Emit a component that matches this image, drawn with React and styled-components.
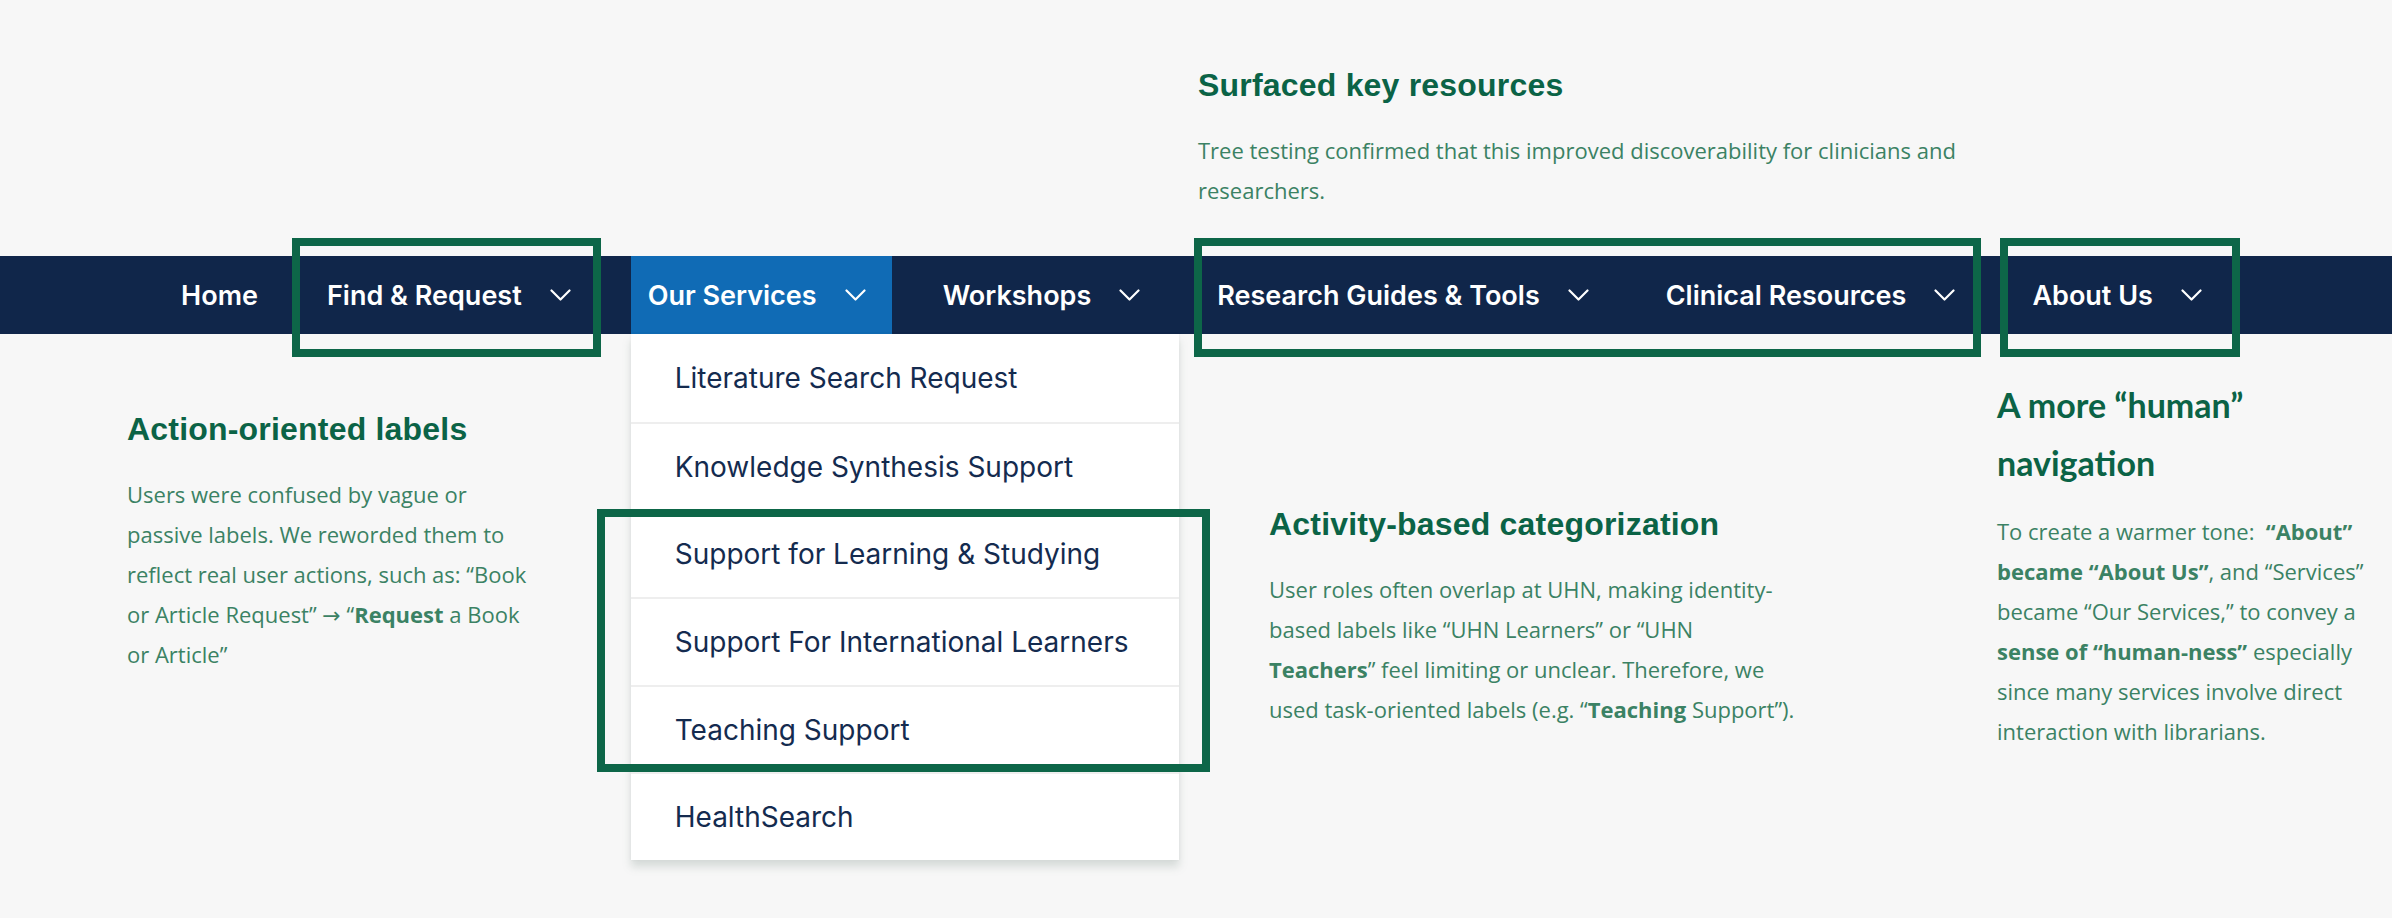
import React from 'react';
import styled, { createGlobalStyle } from 'styled-components';

const GlobalStyle = createGlobalStyle`
  html, body {
    margin: 0;
    padding: 0;
    background: #f7f7f7;
  }
  * {
    box-sizing: border-box;
  }
`;

const Canvas = styled.div`
  width: 2392px;
  height: 918px;
  overflow: hidden;
  background: #f7f7f7;
  display: flex;
  flex-direction: column;
`;

const TopBand = styled.div`
  height: 256px;
  padding: 66px 0 0 1198px;
`;

const Note = styled.div`
  width: ${(p) => p.$width}px;
  margin-left: ${(p) => p.$left || 0}px;
  margin-top: ${(p) => p.$top || 0}px;
  flex-shrink: 0;
`;

const NoteTitle = styled.h2`
  margin: 0;
  font-family: 'Liberation Sans', Arial, sans-serif;
  font-weight: 700;
  font-size: 32px;
  line-height: 38px;
  color: #0b6346;
  letter-spacing: 0.2px;
`;

const HumanTitle = styled(NoteTitle)`
  font-family: Lato, 'Liberation Sans', sans-serif;
  font-size: 34px;
  line-height: 58px;
  letter-spacing: 0;
`;

const NoteText = styled.p`
  margin: ${(p) => p.$gap || 26}px 0 0;
  font-family: 'Open Sans', 'DejaVu Sans', sans-serif;
  font-size: 22px;
  line-height: 40px;
  color: #3b8264;

  b {
    font-weight: 700;
  }
`;

const NavBar = styled.nav`
  height: 78px;
  background: #10264a;
  display: flex;
  justify-content: center;
  align-items: stretch;
  gap: 34px;
  position: relative;
  z-index: 2;
`;

const NavItem = styled.div`
  position: relative;
  display: flex;
  align-items: center;
  gap: 28px;
  padding: ${(p) => (p.$plain ? '0 18px 0 17px' : '0 26px 0 17px')};
  background: ${(p) => (p.$active ? '#106bb5' : 'transparent')};
  font-family: Inter, 'Liberation Sans', sans-serif;
  font-weight: 600;
  font-size: 27px;
  color: #ffffff;
  white-space: nowrap;
`;

const Marked = styled.div`
  position: relative;
  display: flex;
  gap: 34px;

  &::after {
    content: '';
    position: absolute;
    top: ${(p) => p.$t}px;
    right: ${(p) => p.$r}px;
    bottom: ${(p) => p.$b}px;
    left: ${(p) => p.$l}px;
    border: 8px solid #0d6648;
    pointer-events: none;
    z-index: 5;
  }
`;

const MarkedRows = styled(Marked)`
  flex-direction: column;
  gap: 0;
`;

const Dropdown = styled.div`
  position: absolute;
  top: 100%;
  left: 0;
  width: 548px;
  background: #ffffff;
  box-shadow: 0 7px 8px rgba(120, 140, 130, 0.25), 0 0 3px rgba(0, 0, 0, 0.05);
  display: flex;
  flex-direction: column;
`;

const MenuRow = styled.div`
  height: 87.7px;
  display: flex;
  align-items: center;
  padding-left: 44px;
  border-top: ${(p) => (p.$first ? 'none' : '2px solid #eeeeee')};
  font-family: Inter, 'Liberation Sans', sans-serif;
  font-weight: 400;
  font-size: 28px;
  color: #142b4f;
`;

const Notes = styled.div`
  display: flex;
  align-items: flex-start;
  padding-left: 127px;
`;

const Chevron = () => (
  <svg width="21" height="12" viewBox="0 0 21 12" fill="none">
    <polyline
      points="1.5,1.5 10.5,10.5 19.5,1.5"
      stroke="#ffffff"
      strokeWidth="2.2"
      strokeLinecap="round"
      strokeLinejoin="round"
    />
  </svg>
);

const services = [
  'Literature Search Request',
  'Knowledge Synthesis Support',
  'Support for Learning & Studying',
  'Support For International Learners',
  'Teaching Support',
  'HealthSearch',
];

export default function App() {
  return (
    <>
      <GlobalStyle />
      <Canvas>
        <TopBand>
          <Note $width={800}>
            <NoteTitle>Surfaced key resources</NoteTitle>
            <NoteText>
              Tree testing confirmed that this improved discoverability for clinicians and
              researchers.
            </NoteText>
          </Note>
        </TopBand>

        <NavBar>
          <NavItem $plain>Home</NavItem>
          <Marked $t={-18} $r={-4} $b={-23} $l={-18}>
            <NavItem>
              Find &amp; Request <Chevron />
            </NavItem>
          </Marked>
          <NavItem $active>
            Our Services <Chevron />
            <Dropdown>
              <MenuRow $first>{services[0]}</MenuRow>
              <MenuRow>{services[1]}</MenuRow>
              <MarkedRows $t={0} $r={-31} $b={0} $l={-34}>
                <MenuRow>{services[2]}</MenuRow>
                <MenuRow>{services[3]}</MenuRow>
                <MenuRow>{services[4]}</MenuRow>
              </MarkedRows>
              <MenuRow>{services[5]}</MenuRow>
            </Dropdown>
          </NavItem>
          <NavItem>
            Workshops <Chevron />
          </NavItem>
          <Marked $t={-18} $r={0} $b={-23} $l={-6}>
            <NavItem>
              Research Guides &amp; Tools <Chevron />
            </NavItem>
            <NavItem>
              Clinical Resources <Chevron />
            </NavItem>
          </Marked>
          <Marked $t={-18} $r={-12} $b={-23} $l={-15}>
            <NavItem>
              About Us <Chevron />
            </NavItem>
          </Marked>
        </NavBar>

        <Notes>
          <Note $width={408} $top={76}>
            <NoteTitle>Action-oriented labels</NoteTitle>
            <NoteText>
              Users were confused by vague or passive labels. We reworded them to reflect real
              user actions, such as: “Book or Article Request” → “<b>Request</b> a Book or
              Article”
            </NoteText>
          </Note>
          <Note $width={530} $left={734} $top={171}>
            <NoteTitle>Activity-based categorization</NoteTitle>
            <NoteText>
              User roles often overlap at UHN, making identity-based labels like “UHN Learners”
              or “UHN <b>Teachers</b>” feel limiting or unclear. Therefore, we used task-oriented
              labels (e.g. “<b>Teaching</b> Support”).
            </NoteText>
          </Note>
          <Note $width={378} $left={198} $top={42}>
            <HumanTitle>A more “human” navigation</HumanTitle>
            <NoteText $gap={19}>
              To create a warmer tone:{'\u00a0 '}<b>“About” became “About Us”</b>, and
              “Services” became “Our Services,” to convey a <b>sense of “human-ness”</b>{' '}
              especially since many services involve direct interaction with librarians.
            </NoteText>
          </Note>
        </Notes>
      </Canvas>
    </>
  );
}
